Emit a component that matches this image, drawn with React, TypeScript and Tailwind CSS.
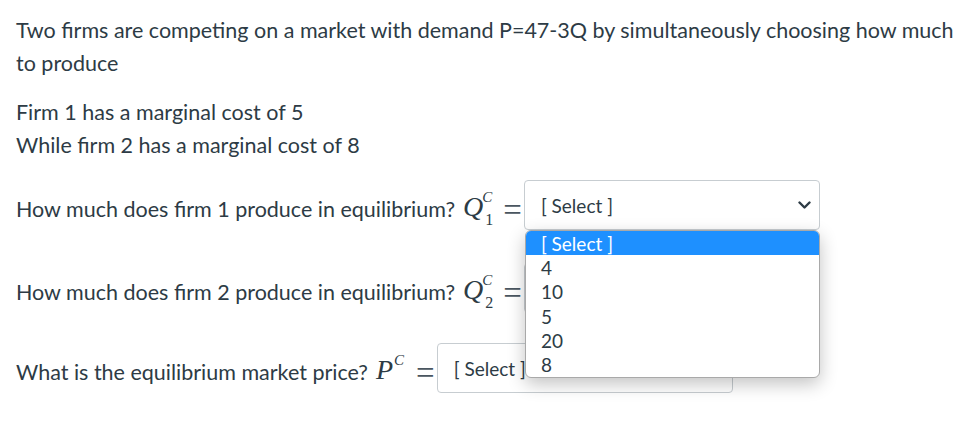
const options = ["[ Select ]", "4", "10", "5", "20", "8"]

function Chevron() {
  return (
    <svg width="13" height="8" viewBox="0 0 13 8" className="text-[#2d3b45]">
      <polyline points="1.5,1.5 6.5,6.5 11.5,1.5" fill="none" stroke="currentColor" strokeWidth="2.4" strokeLinecap="round" strokeLinejoin="round" />
    </svg>
  )
}

// Q₁ᶜ style variable, laid out against the row's top edge (= select box top)
function MathVar({ base, sub }: { base: string; sub?: string }) {
  return (
    <span className="flex items-start font-['Liberation_Serif',serif] text-[#2d3b45]">
      <span className="mt-[13px] h-[28px] text-[28px] italic leading-[28px]">{base}</span>
      <span className={sub ? "-ml-[1px] flex flex-col" : "ml-[1px] flex flex-col"}>
        <span className="mt-[10px] h-[15px] text-[15px] italic leading-[15px]">C</span>
        {sub && <span className="ml-[3px] mt-[7px] h-[16px] text-[16px] leading-[16px]">{sub}</span>}
      </span>
      <span className={sub ? "ml-[10px] mt-[14px] h-[32px] text-[33px] leading-[32px] text-[#4a5660]" : "ml-[12px] mt-[14px] h-[32px] text-[33px] leading-[32px] text-[#4a5660]"}>
        =
      </span>
    </span>
  )
}

function SelectBox({ open }: { open?: boolean }) {
  return (
    <div className="relative ml-[2px]">
      <div className="flex h-[50px] w-[296px] items-center justify-between rounded-[4px] border border-[#c7cdd1] bg-white pl-[16px] pr-[8px] text-[19px]">
        <span>[ Select ]</span>
        {open && <Chevron />}
      </div>
      {open && (
        <div className="absolute left-[1px] top-[50px] z-10 w-[295px] overflow-hidden rounded-[6px] border border-[#a9a9a9] bg-white shadow-[0_6px_18px_rgba(0,0,0,0.24)]">
          {options.map((o, i) => (
            <div
              key={o}
              className={
                i === 0
                  ? "flex h-[24.3px] items-center bg-[#1e90ff] pl-[15px] text-[19px] text-white"
                  : "flex h-[24.3px] items-center pl-[15px] text-[19px]"
              }
            >
              {o}
            </div>
          ))}
        </div>
      )}
    </div>
  )
}

function Row({ label, base, sub, open, className }: { label: string; base: string; sub?: string; open?: boolean; className: string }) {
  return (
    <div className={`flex items-start ${className}`}>
      <span className="mr-[8px] mt-[13px] whitespace-nowrap">{label}</span>
      <MathVar base={base} sub={sub} />
      <SelectBox open={open} />
    </div>
  )
}

export default function App() {
  return (
    <div className="relative h-[421px] w-[973px] overflow-hidden bg-white px-4 pt-[14px] font-['Lato',sans-serif] text-[21.5px] leading-[33px] text-[#2d3b45]">
      <p className="whitespace-nowrap">
        Two firms are competing on a market with demand P=47-3Q by simultaneously choosing how much
        <br />
        to produce
      </p>
      <p className="mt-[16px]">
        Firm 1 has a marginal cost of 5
        <br />
        While firm 2 has a marginal cost of 8
      </p>
      <Row className="mt-[18px]" label="How much does firm 1 produce in equilibrium?" base="Q" sub="1" open />
      <Row className="mt-[33px]" label="How much does firm 2 produce in equilibrium?" base="Q" sub="2" />
      <Row className="mt-[30px]" label="What is the equilibrium market price?" base="P" />
    </div>
  )
}
